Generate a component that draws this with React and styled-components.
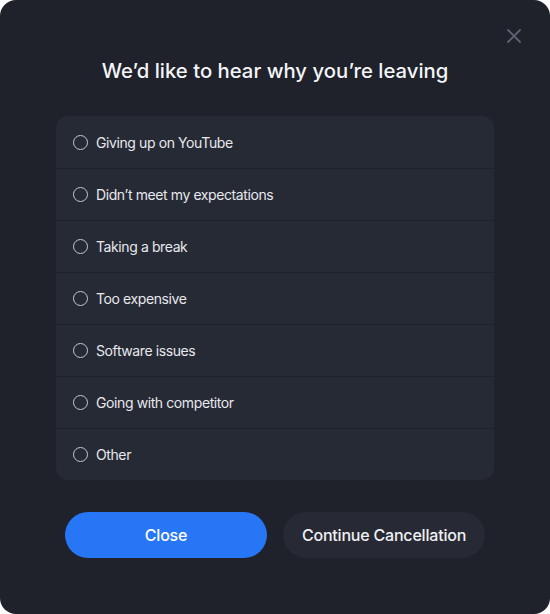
import React, { useState } from "react";
import styled, { createGlobalStyle } from "styled-components";

const Global = createGlobalStyle`
  html, body { margin: 0; padding: 0; background: #ffffff; }
  body { font-family: Inter, "Noto Sans", sans-serif; -webkit-font-smoothing: antialiased; }
  * { box-sizing: border-box; }
`;

const Modal = styled.div`
  position: relative;
  width: 550px;
  height: 614px;
  background: #1f212b;
  border-radius: 16px;
  display: flex;
  flex-direction: column;
  align-items: center;
  padding: 56px 56px 0;
`;

const CloseX = styled.button`
  position: absolute;
  top: 28px;
  right: 28px;
  width: 16px;
  height: 16px;
  padding: 0;
  border: none;
  background: none;
  cursor: pointer;
  display: flex;
`;

const Title = styled.h2`
  margin: 0;
  height: 30px;
  line-height: 30px;
  font-size: 20.3px;
  font-weight: 500;
  color: #f4f5f7;
  letter-spacing: 0;
`;

const List = styled.div`
  margin-top: 30px;
  width: 438px;
  background: #262a35;
  border-radius: 12px;
  overflow: hidden;
  display: flex;
  flex-direction: column;
`;

const Row = styled.label`
  height: 52px;
  display: flex;
  align-items: center;
  gap: 8px;
  padding: 0 16px 0 17px;
  cursor: pointer;
  border-top: ${(p) => (p.$first ? "none" : "1px solid #1f222b")};
  font-size: 14px;
  letter-spacing: -0.4px;
  color: #e6e8ec;
`;

const Radio = styled.span`
  width: 15px;
  height: 15px;
  border-radius: 50%;
  border: 1.5px solid ${(p) => (p.$checked ? "#2776f5" : "#c4c7ce")};
  display: flex;
  align-items: center;
  justify-content: center;
  flex: none;
  &::after {
    content: "";
    width: 6px;
    height: 6px;
    border-radius: 50%;
    background: ${(p) => (p.$checked ? "#2776f5" : "transparent")};
  }
`;

const Buttons = styled.div`
  margin-top: 32px;
  display: flex;
  gap: 16px;
`;

const Button = styled.button`
  width: 202px;
  height: 46px;
  border-radius: 23px;
  border: none;
  font-family: Inter, "Noto Sans", sans-serif;
  font-size: 16px;
  font-weight: 500;
  letter-spacing: -0.2px;
  cursor: pointer;
  background: ${(p) => (p.$primary ? "#2776f5" : "#272a35")};
  color: ${(p) => (p.$primary ? "#ffffff" : "#eef0f3")};
`;

const reasons = [
  "Giving up on YouTube",
  "Didn’t meet my expectations",
  "Taking a break",
  "Too expensive",
  "Software issues",
  "Going with competitor",
  "Other",
];

export default function App() {
  const [sel, setSel] = useState(null);
  return (
    <>
      <Global />
      <Modal>
        <CloseX aria-label="Close">
          <svg width="16" height="16" viewBox="0 0 16 16" fill="none">
            <path d="M2 2L14 14M14 2L2 14" stroke="#5e6270" strokeWidth="1.8" strokeLinecap="round" />
          </svg>
        </CloseX>
        <Title>We’d like to hear why you’re leaving</Title>
        <List>
          {reasons.map((r, i) => (
            <Row key={r} $first={i === 0} onClick={() => setSel(i)}>
              <Radio $checked={sel === i} />
              {r}
            </Row>
          ))}
        </List>
        <Buttons>
          <Button $primary>Close</Button>
          <Button>Continue Cancellation</Button>
        </Buttons>
      </Modal>
    </>
  );
}
